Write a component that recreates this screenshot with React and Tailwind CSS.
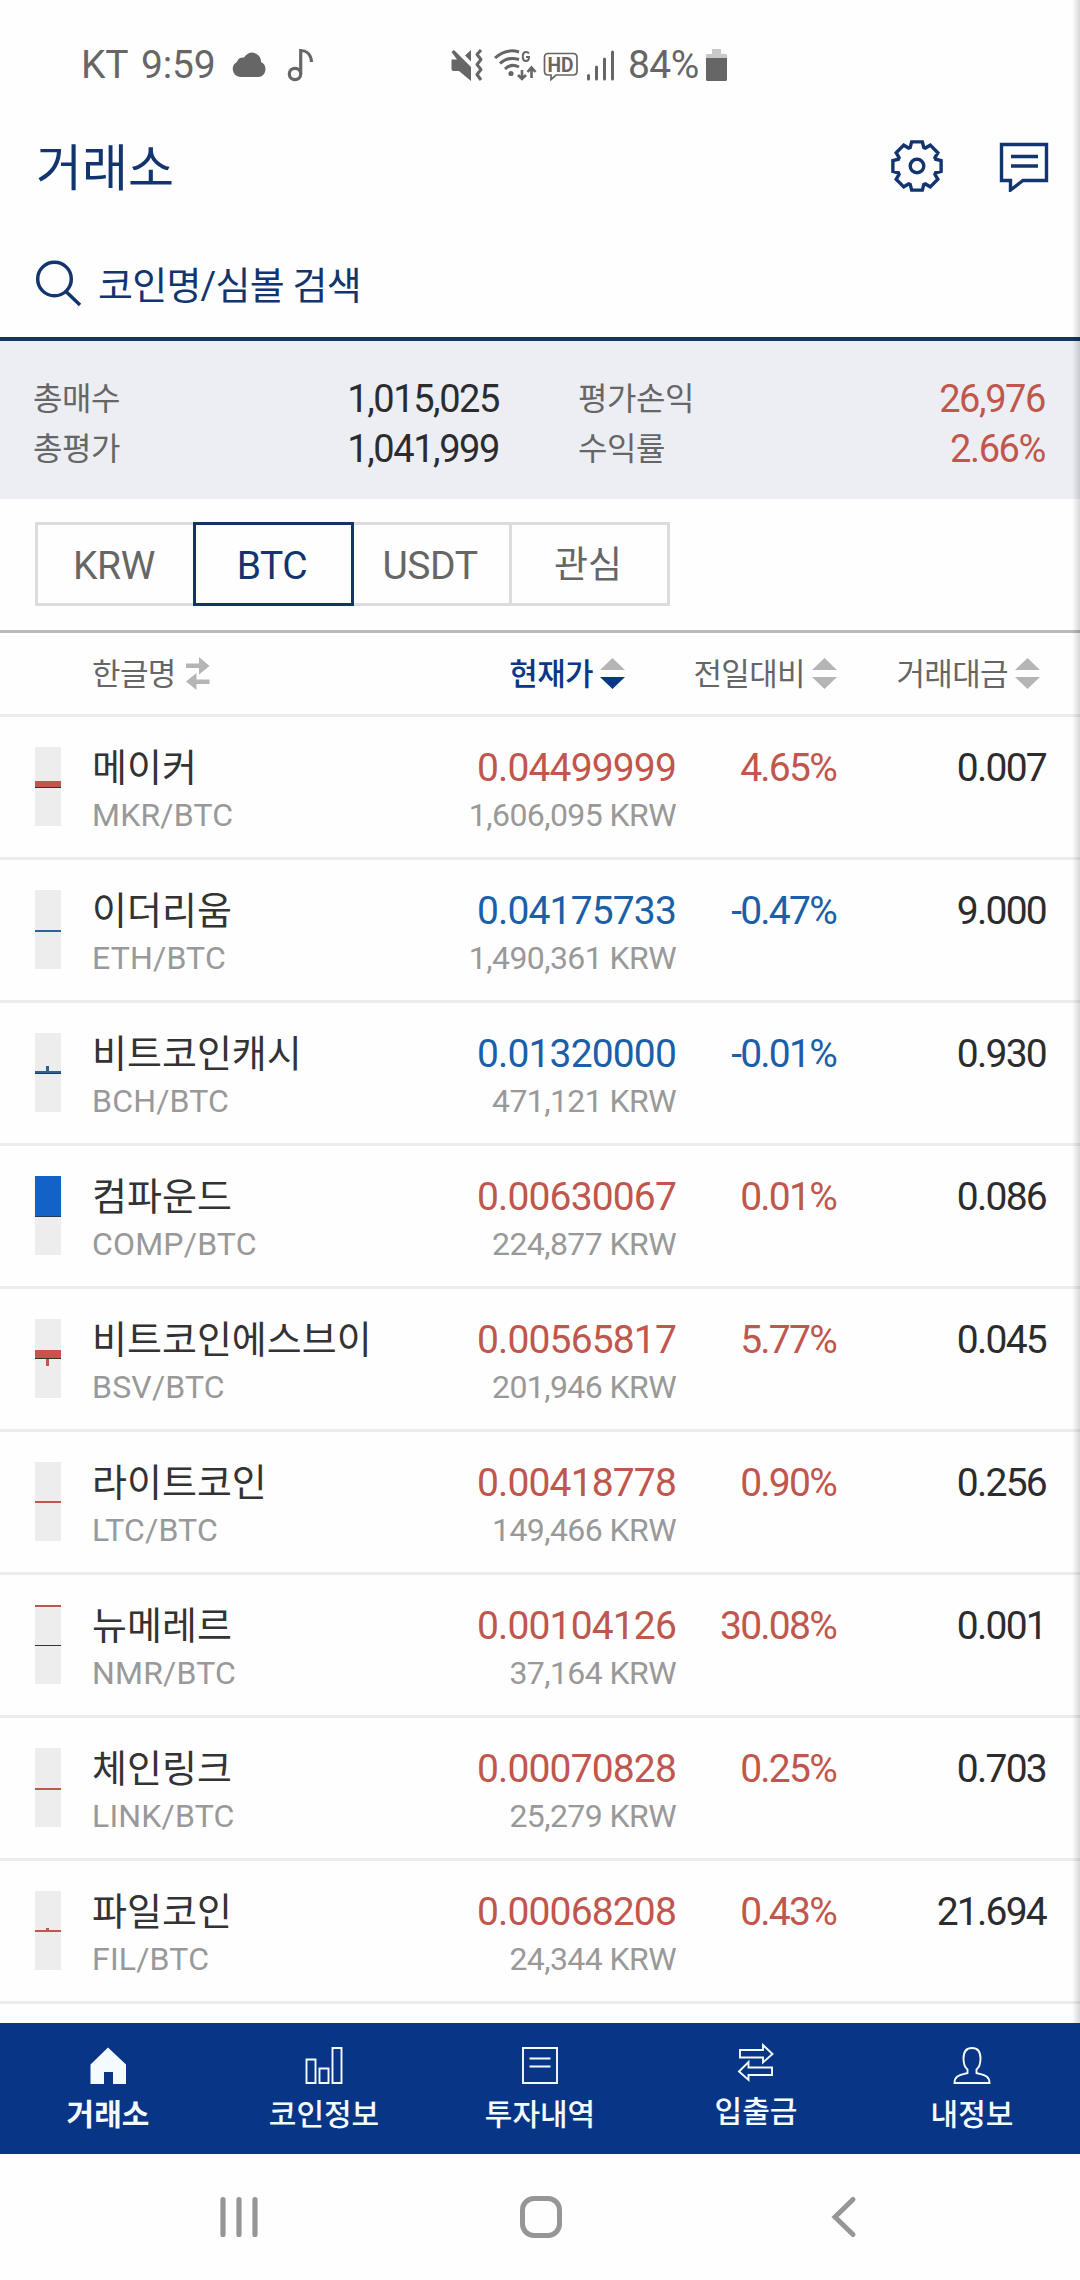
import { useState } from 'react';
import clsx from 'clsx';

const summary = [
  { label: '총매수', value: '1,015,025', label2: '평가손익', value2: '26,976' },
  { label: '총평가', value: '1,041,999', label2: '수익률', value2: '2.66%' },
];

const markets = ['KRW', 'BTC', 'USDT', '관심'];

const RED = '#c0564c';
const DARK = '#333333';

// candle: list of [x, y, width, height, color] inside the 26x79 box
const coins = [
  { name: '메이커', symbol: 'MKR/BTC', price: '0.04499999', krw: '1,606,095', change: '4.65%', volume: '0.007', candle: [[0, 34, 26, 6, RED], [0, 40, 26, 1, DARK]] },
  { name: '이더리움', symbol: 'ETH/BTC', price: '0.04175733', krw: '1,490,361', change: '-0.47%', volume: '9.000', candle: [[0, 40, 26, 2, '#2a6496']] },
  { name: '비트코인캐시', symbol: 'BCH/BTC', price: '0.01320000', krw: '471,121', change: '-0.01%', volume: '0.930', candle: [[11, 33, 3, 6, '#2a6496'], [0, 38, 26, 2, '#2a6496'], [0, 40, 26, 1, '#1d3a5c']] },
  { name: '컴파운드', symbol: 'COMP/BTC', price: '0.00630067', krw: '224,877', change: '0.01%', volume: '0.086', candle: [[0, 0, 26, 40, '#1262c8'], [0, 40, 26, 1, '#1d3a5c']] },
  { name: '비트코인에스브이', symbol: 'BSV/BTC', price: '0.00565817', krw: '201,946', change: '5.77%', volume: '0.045', candle: [[0, 31, 26, 8, '#cb5248'], [0, 39, 26, 1, DARK], [11, 40, 3, 7, RED]] },
  { name: '라이트코인', symbol: 'LTC/BTC', price: '0.00418778', krw: '149,466', change: '0.90%', volume: '0.256', candle: [[0, 39, 26, 2, RED]] },
  { name: '뉴메레르', symbol: 'NMR/BTC', price: '0.00104126', krw: '37,164', change: '30.08%', volume: '0.001', candle: [[0, 0, 26, 2, RED], [0, 40, 26, 1, DARK]] },
  { name: '체인링크', symbol: 'LINK/BTC', price: '0.00070828', krw: '25,279', change: '0.25%', volume: '0.703', candle: [[0, 40, 26, 2, RED]] },
  { name: '파일코인', symbol: 'FIL/BTC', price: '0.00068208', krw: '24,344', change: '0.43%', volume: '21.694', candle: [[11, 37, 3, 2, RED], [0, 39, 26, 2, RED]] },
];

function StatusBar() {
  return (
    <div className="flex h-[120px] pl-[81px] pt-[41px] text-[#666666]">
      <div className="flex h-[48px] w-[369px] items-center text-[39px] leading-[48px]">
        <span className="tracking-[-0.005em] [word-spacing:4px]">KT 9:59</span>
        <svg className="ml-[16px] h-[26px] w-[35px]" viewBox="0 0 35 26" fill="currentColor">
          <path d="M8 25a8 8 0 0 1-3-15 6 6 0 0 1 7-4.500A9 9 0 0 1 29 10 8 8 0 0 1 27 25z" />
        </svg>
        <svg className="ml-[20px] h-[34px] w-[27px]" viewBox="0 0 27 34" fill="none" stroke="currentColor" strokeWidth="3.200">
          <circle cx="8" cy="26" r="5.700" />
          <path d="M13.700 26V2.500C18 2.500 24 5 24.500 14" />
        </svg>
      </div>
      <div className="flex h-[48px] items-center">
        <svg className="h-[34px] w-[34px]" viewBox="0 0 34 34" fill="currentColor">
          <path d="M1.500 11.500H7L1.500 4 4 2 21 19V33L9 23H3.500Q1.500 23 1.500 21z" />
          <path d="M15 7.500 21 2V13.500z" />
          <path d="M31 2l-4 4.500 4 5-4 5 4 5-4 5 4 5.500" fill="none" stroke="currentColor" strokeWidth="3" strokeLinejoin="round" />
        </svg>
        <svg className="ml-[9px] h-[34px] w-[45px]" viewBox="0 0 45 34" fill="none" stroke="currentColor" strokeWidth="3">
          <path d="M2 10Q13 0 26 4M7 15.500Q15 8 26 11.500M12 21Q18 15 26 19" />
          <circle cx="18" cy="25.500" r="2.600" fill="currentColor" stroke="none" />
          <path d="M29 22v8M25 27l4 4 4-4M38.500 30v-9M34.500 24l4-4.500 4 4.500" strokeWidth="2.600" />
          <path d="M36 5.500Q35 4 33 4Q29.800 4 29.800 8.500T33 13Q36 13 36 9H33" strokeWidth="2" />
        </svg>
        <svg className="ml-[5px] h-[34px] w-[36px]" viewBox="0 0 36 34" fill="none" stroke="currentColor">
          <path d="M5 5.500H30Q34 5.500 34 9.500V23Q34 27 30 27H13L8 31.500V27H5Q1.500 27 1.500 23V9.500Q1.500 5.500 5 5.500z" strokeWidth="1.700" />
          <text x="4.500" y="23.500" textLength="26" lengthAdjust="spacingAndGlyphs" className="text-[20px] font-bold" fill="currentColor" stroke="none">HD</text>
        </svg>
        <svg className="ml-[7px] h-[34px] w-[30px]" viewBox="0 0 30 34" stroke="currentColor" strokeWidth="3" strokeLinecap="round">
          <path d="M2.500 27.500V31M10.500 19V31M18.500 11V31M26.500 4V31" />
        </svg>
        <span className="ml-[12px] text-[39px] leading-[48px] tracking-[-0.015em]">84%</span>
        <svg className="ml-[7px] h-[34px] w-[22px]" viewBox="0 0 22 34">
          <path d="M6 1h9v5h5q1 0 1 1v4H0V7q0-1 1-1h5z" fill="#c8c8c8" />
          <path d="M0 10H21V31.500Q21 33 19.500 33H1.500Q0 33 0 31.500z" fill="#666666" />
        </svg>
      </div>
    </div>
  );
}

function GearIcon() {
  const points = [];
  for (let i = 0; i < 8; i++) {
    [[-20, 19.800], [-12.500, 24.700], [12.500, 24.700], [20, 19.800]].forEach(([deg, r]) => {
      const a = ((i * 45 + deg) * Math.PI) / 180;
      points.push(`${(26 + r * Math.sin(a)).toFixed(2)},${(26 - r * Math.cos(a)).toFixed(2)}`);
    });
  }
  return (
    <svg className="h-[52px] w-[52px]" viewBox="0 0 52 52" fill="none" stroke="currentColor" strokeWidth="3.400">
      <polygon points={points.join(' ')} />
      <circle cx="26" cy="26" r="6.800" />
    </svg>
  );
}

function Header() {
  return (
    <header className="border-b-4 border-[#12365f] text-[#12356f]">
      <div className="flex h-[94px] items-center justify-between pl-[36px] pr-[31px]">
        <h1 className="pt-[3px] text-[50px] leading-[60px] font-normal">거래소</h1>
        <div className="flex items-center gap-[56px] pb-[2px]">
          <GearIcon />
          <svg className="h-[52px] w-[50px]" viewBox="0 0 50 52" fill="none" stroke="currentColor" strokeWidth="3.400">
            <path d="M2.500 4.500h45v36H24L11.500 50V40.500h-9z" />
            <path d="M12 16.500h27M12 26h27" />
          </svg>
        </div>
      </div>
      <div className="flex h-[123px] items-center pb-[1px] pl-[35px] pt-[18px]">
        <svg className="h-[48px] w-[48px]" viewBox="0 0 48 48" fill="none" stroke="currentColor" strokeWidth="3.500">
          <circle cx="19.500" cy="19" r="16.800" />
          <path d="M31 31.500 45 45" />
        </svg>
        <span className="ml-[15px] pt-[3px] text-[38px] leading-[48px] tracking-[-0.02em]">코인명/심볼 검색</span>
      </div>
    </header>
  );
}

function Summary() {
  return (
    <section className="h-[158px] bg-[#edeef4] pl-[33px] pr-[35px] pt-[33px]">
      {summary.map((row) => (
        <div key={row.label} className="flex h-[50px] items-center text-[38px] leading-[50px] tracking-[-0.037em]">
          <span className="w-[180px] text-[32px] tracking-[-0.015em] text-[#666666]">{row.label}</span>
          <span className="w-[286px] text-right text-[#2c2c2e]">{row.value}</span>
          <span className="ml-[79px] flex-1 text-[32px] tracking-[-0.015em] text-[#666666]">{row.label2}</span>
          <span className="text-[#c0564c]">{row.value2}</span>
        </div>
      ))}
    </section>
  );
}

function SortIcon({ active }) {
  return (
    <svg className="h-[32px] w-[25px]" viewBox="0 0 25 32">
      <path d="M12.500 0 25 12H0z" fill="#b5b5b5" />
      <path d="M0 19H25L12.500 31z" fill={active ? '#0a3787' : '#b5b5b5'} />
    </svg>
  );
}

function ListHeader() {
  return (
    <div className="flex h-[87px] items-center border-y-3 border-t-[#b9bbbb] border-b-[#ececee] pl-[92px] pr-[40px] text-[31px] leading-[40px] tracking-[-0.02em] text-[#666666]">
      <div className="flex items-center gap-[10px]">
        <span className="pt-[2px]">한글명</span>
        <svg className="h-[34px] w-[24px]" viewBox="0 0 24 34" fill="#b5b5b5">
          <path d="M0 6.500h13V0l10.500 9L13 17.500V11H0z" />
          <path d="M23.500 22.500h-13V16L0 24.500 10.500 33V27h13z" />
        </svg>
      </div>
      <div className="flex flex-1 items-center justify-end gap-[7px] text-[#0a3787]">
        <span className="pt-[2px] font-medium">현재가</span>
        <SortIcon active />
      </div>
      <div className="flex w-[212px] items-center justify-end gap-[7px]">
        <span className="pt-[2px]">전일대비</span>
        <SortIcon />
      </div>
      <div className="flex w-[203px] items-center justify-end gap-[7px]">
        <span className="pt-[2px]">거래대금</span>
        <SortIcon />
      </div>
    </div>
  );
}

function CoinRow({ coin }) {
  // the text follows the change value, not the candle
  const color = coin.change.startsWith('-') ? 'text-[#1b5fa8]' : 'text-[#c0564c]';

  return (
    <div className="flex h-[143px] border-b-3 border-[#ececee] pl-[35px] pt-[28px] text-[39px] leading-[46px] tracking-[-0.022em]">
      <svg className="mt-[2px] h-[79px] w-[26px] bg-[#ededed]" viewBox="0 0 26 79" shapeRendering="crispEdges">
        {coin.candle.map(([x, y, w, h, fill], i) => (
          <rect key={i} x={x} y={y} width={w} height={h} fill={fill} />
        ))}
      </svg>
      <div className="ml-[31px] w-[310px] whitespace-nowrap">
        <div className="text-[38px] tracking-normal text-[#333333]">{coin.name}</div>
        <div className="mt-1 text-[32px] leading-[40px] tracking-[0.006em] text-[#999999]">{coin.symbol}</div>
      </div>
      <div className="w-[274px] text-right">
        <div className={color}>{coin.price}</div>
        <div className="mt-1 text-[32px] leading-[40px] tracking-[-0.018em] text-[#999999]">{coin.krw} KRW</div>
      </div>
      <div className={clsx('w-[160px] text-right tracking-[-0.045em]', color)}>{coin.change}</div>
      <div className="w-[210px] text-right tracking-[-0.045em] text-[#2c2c2e]">{coin.volume}</div>
    </div>
  );
}

const tabs = [
  {
    label: '거래소',
    icon: <path d="M19 1.500 37 18.500V38H24V26H15V38H1.500V18.500z" fill="currentColor" stroke="none" />,
  },
  {
    label: '코인정보',
    icon: <path d="M1.500 13.500h9V37h-9zM14.500 22.500h9V37h-9zM27.500 2H36.500v35H27.500z" />,
  },
  {
    label: '투자내역',
    icon: <path d="M2 2h34v35H2zM8.500 12.500h21M8.500 20.500h21" />,
  },
  {
    label: '입출금',
    raised: true,
    icon: <path d="M3 7H26V2L35.500 11 26 19.500V14.500H3zM35 24.500H11.500V19L2 28.500 11.500 37V32H35z" />,
  },
  {
    label: '내정보',
    icon: <path d="M19 2C13 2 10.500 6 10.500 12.500 10.500 18 12 21.500 14.500 23.500V27C8 29 1.500 29 1.500 37H36.500C36.500 29 30 29 23.500 27V23.500C26 21.500 27.500 18 27.500 12.500 27.500 6 25 2 19 2z" />,
  },
];

function TabBar() {
  return (
    <nav className="grid h-[131px] grid-cols-5 bg-[#083585] text-[#f4fbff]">
      {tabs.map((tab, i) => (
        <div key={tab.label} className={clsx('flex flex-col items-center', tab.raised ? 'pt-[20px]' : 'pt-[23px]')}>
          <svg className="h-[40px] w-[38px]" viewBox="0 0 38 40" fill="none" stroke="currentColor" strokeWidth="1.900">
            {tab.icon}
          </svg>
          <span className={clsx('mt-[9px] text-[30px] leading-[40px]', i === 0 ? 'font-bold' : 'font-medium')}>
            {tab.label}
          </span>
        </div>
      ))}
    </nav>
  );
}

function SystemNav() {
  return (
    <div className="flex h-[126px] items-center pl-[218px] text-[#969696]">
      <svg className="h-[44px] w-[42px]" viewBox="0 0 42 44" fill="none" stroke="currentColor" strokeWidth="5.200" strokeLinecap="round">
        <path d="M5 4.500V39.500M21 4.500V39.500M37 4.500V39.500" />
      </svg>
      <svg className="ml-[259px] h-[44px] w-[44px]" viewBox="0 0 44 44" fill="none" stroke="currentColor" strokeWidth="5">
        <rect x="3.500" y="3.500" width="37" height="37" rx="11.500" />
      </svg>
      <svg className="ml-[267px] h-[44px] w-[28px]" viewBox="0 0 28 44" fill="none" stroke="currentColor" strokeWidth="5" strokeLinecap="round">
        <path d="M23 4.500 5 22 23 39.500" />
      </svg>
    </div>
  );
}

export default function App() {
  const [market, setMarket] = useState('BTC');

  return (
    <div className="relative h-[2280px] w-[1080px] overflow-hidden bg-[#fefefe] font-[Roboto,'Noto_Sans_CJK_KR',sans-serif]">
      <StatusBar />
      <Header />
      <Summary />

      {/* Market tabs */}
      <div className="flex h-[131px] pl-[35px] pt-[23px]">
        {markets.map((m, i) => (
          <button
            key={m}
            onClick={() => setMarket(m)}
            className={clsx(
              'h-[84px] w-[161px] border-3 pt-[3px] pr-[3px] leading-[46px]',
              i > 0 && '-ml-[3px]',
              m === market ? 'z-10 border-[#12365f] text-[#12356f]' : 'border-[#dcdcdc] text-[#666666]',
              m === '관심' ? 'text-[37px]' : 'text-[39px] tracking-[-0.01em]'
            )}
          >
            {m}
          </button>
        ))}
      </div>

      <ListHeader />
      <div className="h-[1306px] overflow-hidden">
        {coins.map((coin) => (
          <CoinRow key={coin.symbol} coin={coin} />
        ))}
      </div>
      <TabBar />
      <SystemNav />

      {/* Edge panel shadow */}
      <div className="absolute top-0 right-0 h-[2023px] w-[8px] bg-gradient-to-r from-transparent to-black/15" />
    </div>
  );
}
